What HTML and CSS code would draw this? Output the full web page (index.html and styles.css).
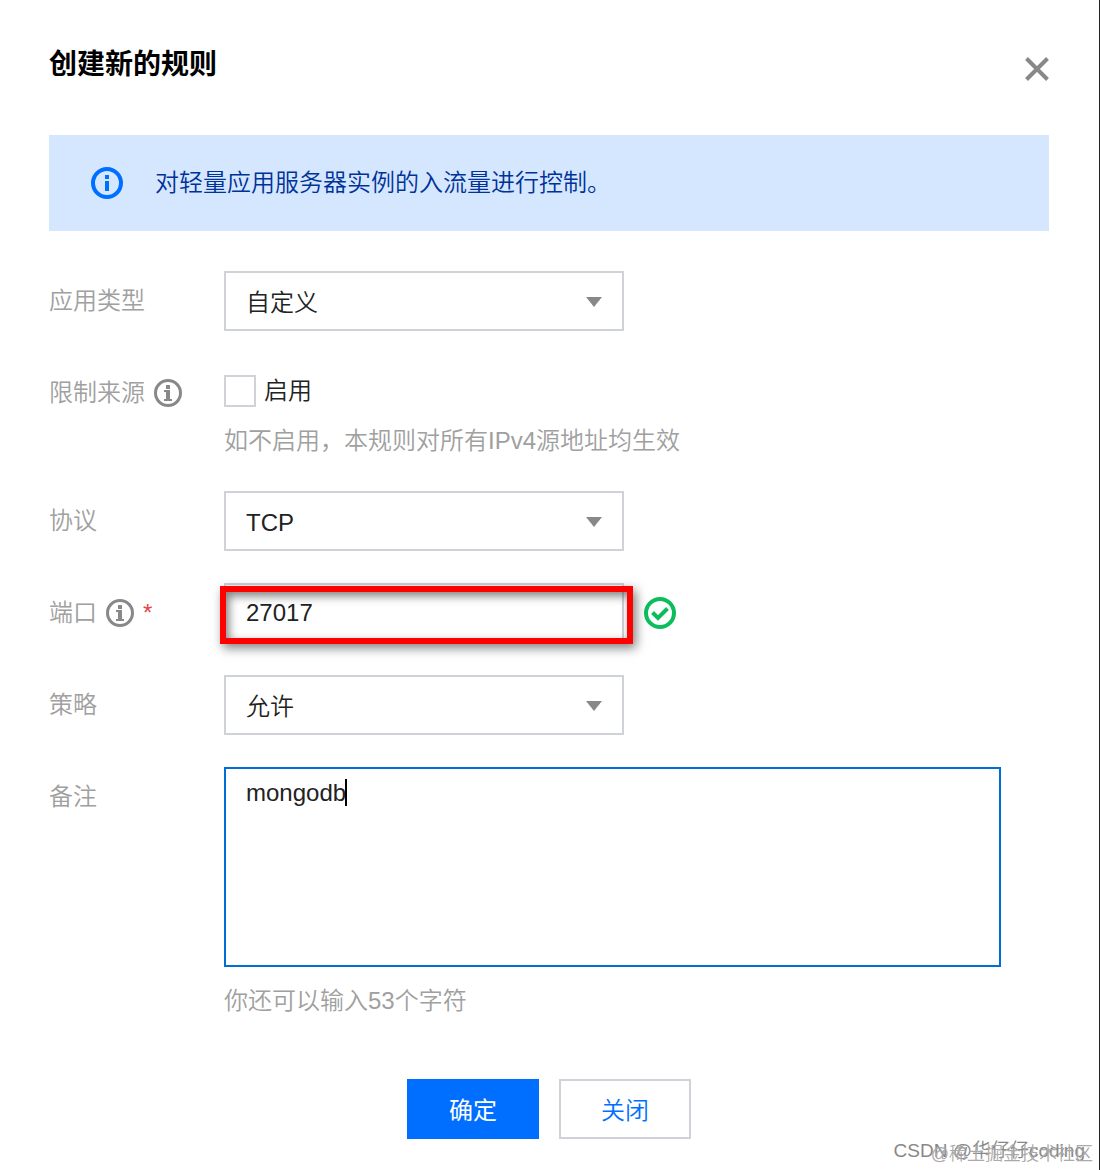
FILE: index.html
```html
<!DOCTYPE html>
<html lang="zh-CN">
<head>
  <meta charset="UTF-8">
  <meta name="viewport" content="width=device-width, initial-scale=1.0">
  <title>创建新的规则</title>
  <link rel="stylesheet" href="styles.css">
</head>
<body>
  <main class="dialog">
    <header class="dialog-header">
      <h1>创建新的规则</h1>
      <button type="button" class="close" aria-label="关闭窗口">
        <svg width="24" height="24" viewBox="0 0 24 24"><path d="M1.500 1.500L22.500 22.500M22.500 1.500L1.500 22.500" stroke="#888" stroke-width="4" fill="none"/></svg>
      </button>
    </header>

    <div class="alert">
      <svg width="32" height="32" viewBox="0 0 32 32"><circle cx="16" cy="16" r="14" fill="none" stroke="#006eff" stroke-width="4"/><path d="M14 8h4v4h-4zM14 14h4v10h-4z" fill="#006eff"/></svg>
      <p>对轻量应用服务器实例的入流量进行控制。</p>
    </div>

    <form class="rule-form">
      <div class="row">
        <label class="label" for="appType">应用类型</label>
        <div class="select">
          <select id="appType"><option>自定义</option></select>
        </div>
      </div>

      <div class="row">
        <div class="label">限制来源
          <svg width="28" height="28" viewBox="0 0 28 28"><circle cx="14" cy="14" r="12.5" fill="none" stroke="#888" stroke-width="3"/><path d="M12 6h4v4h-4zM10 11h6v9h2v2h-8v-2h2v-7h-2z" fill="#888"/></svg>
        </div>
        <div>
          <label class="check"><input type="checkbox" id="limitSource">启用</label>
          <p class="hint">如不启用，本规则对所有IPv4源地址均生效</p>
        </div>
      </div>

      <div class="row">
        <label class="label" for="protocol">协议</label>
        <div class="select">
          <select id="protocol"><option>TCP</option></select>
        </div>
      </div>

      <div class="row">
        <label class="label" for="port">端口
          <svg width="28" height="28" viewBox="0 0 28 28"><circle cx="14" cy="14" r="12.5" fill="none" stroke="#888" stroke-width="3"/><path d="M12 6h4v4h-4zM10 11h6v9h2v2h-8v-2h2v-7h-2z" fill="#888"/></svg>
          <span class="required">*</span>
        </label>
        <div class="port">
          <div class="port-field">
            <input type="text" id="port" value="27017">
            <span class="highlight"></span>
          </div>
          <svg width="32" height="32" viewBox="0 0 32 32"><circle cx="16" cy="16" r="14" fill="none" stroke="#0abf5b" stroke-width="4"/><path d="M8.500 15.500L14 21L23.500 11.500" fill="none" stroke="#0abf5b" stroke-width="4"/></svg>
        </div>
      </div>

      <div class="row">
        <label class="label" for="policy">策略</label>
        <div class="select">
          <select id="policy"><option>允许</option></select>
        </div>
      </div>

      <div class="row">
        <label class="label" for="remark">备注</label>
        <div class="remark">
          <textarea id="remark">mongodb</textarea>
          <span class="caret"></span>
          <p class="hint">你还可以输入53个字符</p>
        </div>
      </div>

      <footer class="actions">
        <button type="submit" class="btn primary">确定</button>
        <button type="button" class="btn">关闭</button>
      </footer>
    </form>

    <span class="watermark csdn">CSDN @华仔仔coding</span>
    <span class="watermark juejin">@稀土掘金技术社区</span>
  </main>
</body>
</html>
```
FILE: styles.css
```css
* { box-sizing: border-box; }
body, h1, p { margin: 0; }
body, input, select, textarea, button {
  font-family: "Liberation Sans", "Noto Sans CJK SC", sans-serif;
  font-size: 24px;
  font-weight: 350;
  line-height: 36px;
}
svg { display: block; flex-shrink: 0; }

.dialog {
  position: relative;
  min-height: 100vh;
  padding: 47px 50px 31px 49px;
  border-right: 1px solid #222;
  background: #fff;
  color: #222;
}
.dialog-header {
  display: flex; justify-content: space-between; align-items: flex-end;
  margin-bottom: 52px;
}
h1 { font-size: 28px; font-weight: bold; line-height: 36px; color: #000; }
.close {
  display: flex; align-items: center;
  height: 28px; padding: 0;
  border: 0; background: none;
}

.alert {
  display: flex; align-items: center; gap: 32px;
  min-height: 96px; padding: 0 42px;
  margin-bottom: 40px;
  background: #d5e7ff; color: #003299;
}

.rule-form { display: flex; flex-direction: column; gap: 32px; }
.row { display: grid; grid-template-columns: 175px 1fr; }
.label {
  display: flex; align-items: center; gap: 9px;
  height: 60px;
  color: #a0a0a0;
}
.required { color: #e54545; }

.select { position: relative; max-width: 400px; }
.select::after {
  content: "";
  position: absolute; right: 22px; top: 26px;
  border: 8px solid transparent;
  border-top: 10px solid #888; border-bottom: 0;
  pointer-events: none;
}
select, .port input {
  appearance: none;
  display: block;
  width: 100%; height: 60px; padding: 0 20px;
  border: 2px solid #cfd3d8; border-radius: 0;
  background: #fff; color: #222;
}
select { padding-top: 3px; }

.check { display: flex; align-items: center; gap: 8px; height: 56px; }
.check input {
  appearance: none;
  width: 32px; height: 32px; margin: 0;
  border: 2px solid #cfd3d8;
}
.hint { margin-top: 4px; color: #a0a0a0; }

.port { display: flex; align-items: center; gap: 20px; }
.port-field { position: relative; flex: 0 1 400px; }
.highlight {
  position: absolute; top: 3px; right: -9px; bottom: -1px; left: -4px;
  border: 6px solid #f00;
  box-shadow: 3px 4px 10px rgba(0, 0, 0, .5), inset 3px 4px 10px rgba(0, 0, 0, .5);
  pointer-events: none;
}

.remark { position: relative; max-width: 777px; }
textarea {
  display: block;
  width: 100%; height: 200px; padding: 6px 20px;
  border: 2px solid #006ed5; border-radius: 0;
  color: #222;
  resize: none; outline: 0;
}
.caret {
  position: absolute; left: 121px; top: 12px;
  width: 2px; height: 27px;
  background: #000;
}
.remark .hint { margin-top: 16px; }

.actions {
  display: flex; justify-content: center; gap: 20px;
  margin-top: 28px;
}
.btn {
  width: 132px; height: 60px; padding: 4px 0 0;
  border: 2px solid #cfd3d8;
  background: #fff; color: #006eff;
}
.primary { border-color: #006eff; background: #006eff; color: #fff; font-weight: 400; }

.watermark { position: absolute; line-height: 24px; white-space: nowrap; color: #888; }
.csdn { right: 14px; bottom: 7px; font-size: 19px; }
.juejin { right: 6px; bottom: 4px; font-size: 18px; color: #aaa; }
```
